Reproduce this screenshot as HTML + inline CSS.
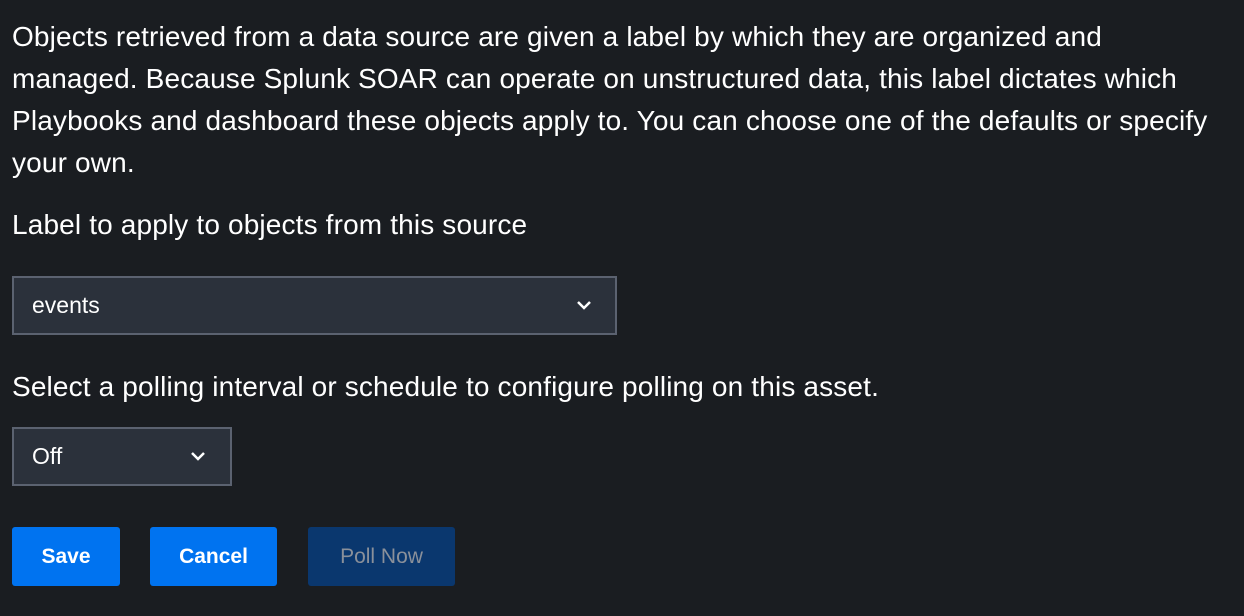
<!DOCTYPE html>
<html><head><meta charset="utf-8"><style>
html,body{margin:0;padding:0;}
body{width:1244px;height:616px;background:#1a1d21;font-family:"Liberation Sans",Arial,sans-serif;color:#fff;position:relative;overflow:hidden;}
.l{position:absolute;left:12px;font-size:28px;letter-spacing:0.15px;white-space:nowrap;line-height:32px;}
.sel{position:absolute;background:#2b313b;border:2px solid #5b6270;box-sizing:border-box;}
.sel span{position:absolute;left:18px;top:13px;font-size:23px;line-height:28px;color:#fff;}
.sel svg{position:absolute;top:21px;}
.btn{position:absolute;top:527px;height:59px;border-radius:3px;background:#0073f0;color:#fff;font-weight:bold;font-size:21px;line-height:60px;text-align:center;}
</style></head><body>
<div class="l" style="top:21px">Objects retrieved from a data source are given a label by which they are organized and</div>
<div class="l" style="top:63px">managed. Because Splunk SOAR can operate on unstructured data, this label dictates which</div>
<div class="l" style="top:105px">Playbooks and dashboard these objects apply to. You can choose one of the defaults or specify</div>
<div class="l" style="top:147px">your own.</div>
<div class="l" style="top:209px">Label to apply to objects from this source</div>
<div class="sel" style="left:12px;top:276px;width:605px;height:59px"><span>events</span>
<svg style="left:562px" width="16" height="12" viewBox="0 0 16 12"><path d="M2 3 L8 9 L14 3" stroke="#fff" stroke-width="2.5" fill="none"/></svg></div>
<div class="l" style="top:371px">Select a polling interval or schedule to configure polling on this asset.</div>
<div class="sel" style="left:12px;top:427px;width:220px;height:59px"><span>Off</span>
<svg style="left:176px" width="16" height="12" viewBox="0 0 16 12"><path d="M2 3 L8 9 L14 3" stroke="#fff" stroke-width="2.5" fill="none"/></svg></div>
<div class="btn" style="left:12px;width:108px">Save</div>
<div class="btn" style="left:150px;width:127px">Cancel</div>
<div class="btn" style="left:308px;width:147px;background:#0a376e;color:#8a909a;font-weight:normal">Poll Now</div>
</body></html>
